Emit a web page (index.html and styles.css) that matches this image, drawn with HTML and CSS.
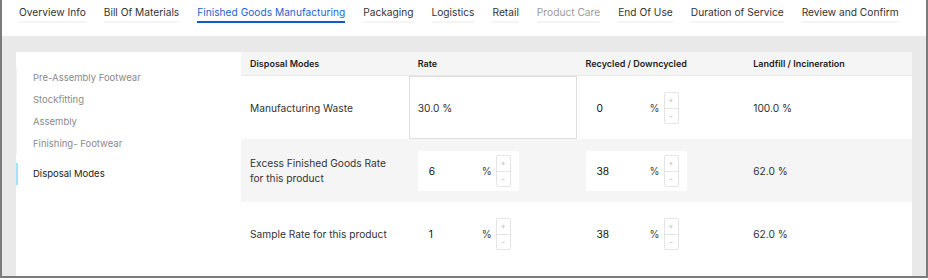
FILE: index.html
```html
<!DOCTYPE html>
<html lang="en">
<head>
    <meta charset="UTF-8">
    <meta name="viewport" content="width=device-width, initial-scale=1.0">
    <title>Finished Goods Manufacturing</title>
    <link rel="stylesheet" href="styles.css">
</head>
<body>
    <div class="frame">
        <!-- Top tabs -->
        <nav class="tabs">
            <a class="tab">Overview Info</a>
            <a class="tab">Bill Of Materials</a>
            <a class="tab active">Finished Goods Manufacturing</a>
            <a class="tab">Packaging</a>
            <a class="tab">Logistics</a>
            <a class="tab">Retail</a>
            <a class="tab muted">Product Care</a>
            <a class="tab">End Of Use</a>
            <a class="tab">Duration of Service</a>
            <a class="tab">Review and Confirm</a>
        </nav>

        <main class="stage">
            <section class="card">
                <!-- Steps on the left -->
                <aside class="steps">
                    <ul class="step-list">
                        <li>Pre-Assembly Footwear</li>
                        <li>Stockfitting</li>
                        <li>Assembly</li>
                        <li>Finishing- Footwear</li>
                    </ul>
                    <div class="step active">Disposal Modes</div>
                </aside>

                <!-- Disposal table -->
                <div class="table">
                    <div class="row head">
                        <div class="cell">Disposal Modes</div>
                        <div class="cell">Rate</div>
                        <div class="cell">Recycled / Downcycled</div>
                        <div class="cell">Landfill / Incineration</div>
                    </div>

                    <div class="row">
                        <div class="cell">Manufacturing Waste</div>
                        <div class="cell boxed">30.0 %</div>
                        <div class="cell">
                            <div class="qty">
                                <span class="qty-val">0</span>
                                <span class="qty-unit">%</span>
                                <span class="spin"><span>+</span><span>-</span></span>
                            </div>
                        </div>
                        <div class="cell">100.0 %</div>
                    </div>

                    <div class="row shade">
                        <div class="cell two-line">Excess Finished Goods Rate<br>for this product</div>
                        <div class="cell">
                            <div class="qty">
                                <span class="qty-val">6</span>
                                <span class="qty-unit">%</span>
                                <span class="spin"><span>+</span><span>-</span></span>
                            </div>
                        </div>
                        <div class="cell">
                            <div class="qty">
                                <span class="qty-val">38</span>
                                <span class="qty-unit">%</span>
                                <span class="spin"><span>+</span><span>-</span></span>
                            </div>
                        </div>
                        <div class="cell">62.0 %</div>
                    </div>

                    <div class="row">
                        <div class="cell">Sample Rate for this product</div>
                        <div class="cell">
                            <div class="qty">
                                <span class="qty-val">1</span>
                                <span class="qty-unit">%</span>
                                <span class="spin"><span>+</span><span>-</span></span>
                            </div>
                        </div>
                        <div class="cell">
                            <div class="qty">
                                <span class="qty-val">38</span>
                                <span class="qty-unit">%</span>
                                <span class="spin"><span>+</span><span>-</span></span>
                            </div>
                        </div>
                        <div class="cell">62.0 %</div>
                    </div>
                </div>
            </section>
        </main>
    </div>
</body>
</html>
```

FILE: styles.css
```css
* {
    box-sizing: border-box;
}

body {
    margin: 0;
    font-family: Inter, "Liberation Sans", sans-serif;
    font-size: 10.2px;
    color: #333;
    background: #fff;
}

.frame {
    width: 928px;
    height: 278px;
    border: 2px solid #7b7b7b;
    border-top: 0;
    overflow: hidden;
    display: flex;
    flex-direction: column;
}

/* tabs */
.tabs {
    display: flex;
    gap: 18px;
    padding: 6px 0 13px 17px;
    background: #fff;
}

.tab {
    line-height: 13px;
    padding-bottom: 2px;
    border-bottom: 2px solid #f4f4f4;
    color: #333;
    white-space: nowrap;
}

.tab.active {
    color: #1f5fd4;
    border-bottom-color: #0b5bd3;
}

.tab.muted {
    color: #9a9a9a;
}

/* grey stage + white card */
.stage {
    flex: 1;
    display: flex;
    background: #e9e9e9;
    padding: 16px 14px 0;
}

.card {
    flex: 1;
    display: flex;
    background: #fff;
}

.steps {
    width: 225px;
    flex-shrink: 0;
    padding-top: 15px;
    font-size: 9.5px;
}

.step-list {
    list-style: none;
    margin: 0;
    padding: 0;
    border-left: 1px solid #f2f2f2;
}

.step-list li {
    line-height: 22px;
    padding-left: 16px;
    color: #8a8a8a;
}

.step.active {
    margin-top: 8px;
    line-height: 22px;
    padding-left: 15px;
    border-left: 2px solid #a4e3f5;
    color: #222;
}

/* table */
.table {
    flex: 1;
}

.row {
    display: grid;
    grid-template-columns: repeat(4, 1fr);
    align-items: center;
    height: 63px;
}

.row.head {
    height: 24px;
    background: #f5f5f5;
    border-bottom: 1px solid #e8e8e8;
    font-size: 9px;
    font-weight: 600;
    color: #1e1e1e;
}

.row.shade {
    background: #f5f5f5;
}

.cell {
    padding-left: 9px;
}

.cell.two-line {
    line-height: 14.5px;
}

.cell.boxed {
    align-self: stretch;
    display: flex;
    align-items: center;
    padding-left: 8px;
    border: 1px solid #dedede;
}

.qty {
    width: 101px;
    height: 40px;
    display: flex;
    align-items: center;
    padding: 0 8px 0 11px;
    background: #fff;
}

.qty-val {
    flex: 1;
    color: #111;
}

.qty-unit {
    color: #444;
}

.spin {
    width: 15px;
    margin-left: 4px;
    display: flex;
    flex-direction: column;
    border: 1px solid #e4e4e4;
    border-radius: 2px;
}

.spin span {
    height: 15px;
    display: flex;
    align-items: center;
    justify-content: center;
    font-size: 8px;
    color: #b8b8b8;
}

.spin span + span {
    border-top: 1px solid #e4e4e4;
}
```
